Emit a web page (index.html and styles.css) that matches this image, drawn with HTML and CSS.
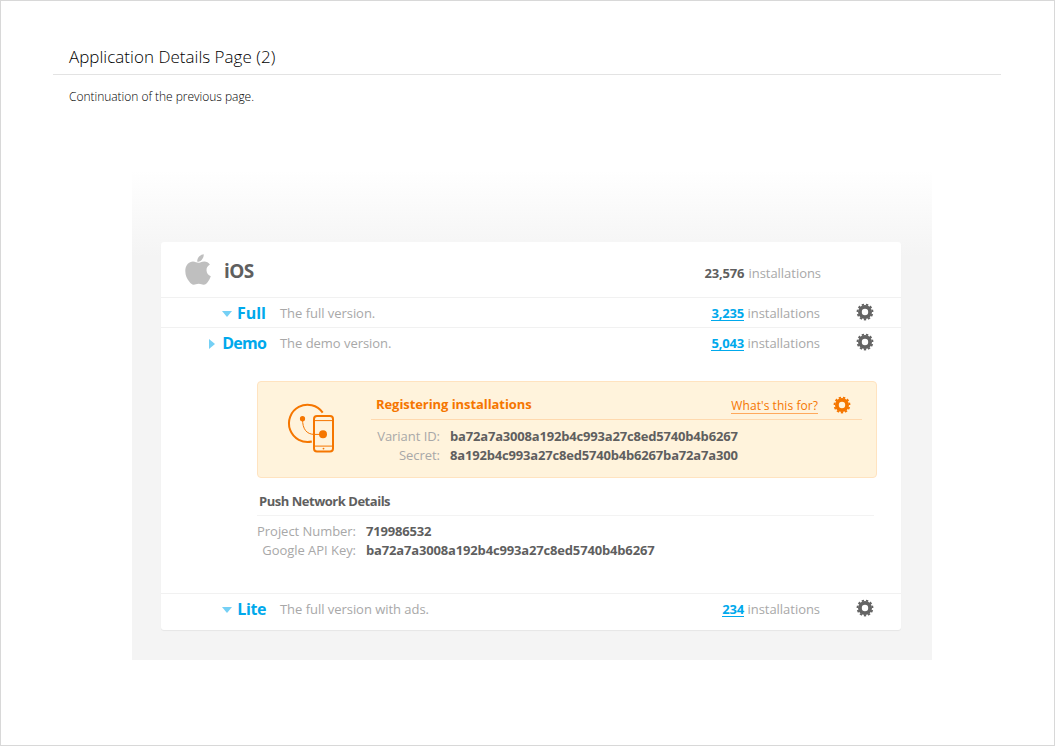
FILE: index.html
```html
<!DOCTYPE html>
<html lang="en">
<head>
<meta charset="utf-8">
<title>Application Details Page (2)</title>
<link rel="stylesheet" href="styles.css">
</head>
<body>
<svg class="defs" width="0" height="0" aria-hidden="true">
  <symbol id="gear" viewBox="0 0 18 18">
    <g fill="none" stroke="currentColor">
      <circle cx="9" cy="9" r="5.1" stroke-width="3.8"/>
      <circle cx="9" cy="9" r="7.500" stroke-width="1.800" pathLength="22" stroke-dasharray="1.1 .9" stroke-dashoffset="-.95"/>
    </g>
  </symbol>
</svg>
<main class="sheet">
  <header class="intro">
    <h1 class="title">Application Details Page (2)</h1>
    <p class="lead">Continuation of the previous page.</p>
  </header>
  <div class="backdrop">
    <section class="card">
      <div class="platform">
        <svg class="apple" viewBox="0 0 26 31" width="26" height="31"><path fill="#bfbfbf" d="M18.7.2c.3 2.100-.7 4.100-1.900 5.500-1.200 1.400-2.900 2.200-4.500 2.100-.3-2 .7-4.100 1.800-5.300C15.300 1.200 17.200.3 18.700.2zM24.900 10.600c-2.300 1.400-3.500 3.300-3.400 5.700.1 2.900 1.700 4.900 4.300 6-.7 2-1.700 3.900-3 5.600-1.100 1.500-2.300 2.800-4.200 2.800-1.800 0-2.500-1-4.900-1s-3.300 1-5 1c-1.800 0-3.100-1.400-4.300-3C2 25.300.3 21.300.3 17c0-5.900 3.700-9.500 7.700-9.500 2.100 0 3.900 1.300 5.300 1.300 1.300 0 3.400-1.400 6-1.400 2.300 0 4.300 1.200 5.600 3.200z"/></svg>
        <h2 class="platform-name">iOS</h2>
        <span class="total"><b>23,576</b> <span class="unit">installations</span></span>
      </div>
      <div class="variant">
        <div class="name"><svg class="down" width="10" height="6"><path d="M0 0h10L5 6z"/></svg><a class="full">Full</a></div>
        <span class="about">The full version.</span>
        <span class="count"><a>3,235</a> <span class="unit">installations</span></span>
        <svg class="gear"><use href="#gear"/></svg>
      </div>
      <div class="variant">
        <div class="name"><svg class="side" width="6" height="10"><path d="M0 0v10L6 5z"/></svg><a class="demo">Demo</a></div>
        <span class="about">The demo version.</span>
        <span class="count"><a>5,043</a> <span class="unit">installations</span></span>
        <svg class="gear"><use href="#gear"/></svg>
      </div>
      <div class="details">
        <div class="notice">
          <svg class="device" width="48" height="50" viewBox="0 0 48 50" fill="none" stroke="#f57600">
            <path stroke-width="2" d="M34.700 8.600A18.600 18.600 0 1 0 23.800 37.500"/>
            <rect x="26" y="12" width="19" height="35.500" rx="3" stroke-width="2"/>
            <path stroke-width="1" d="M26 16.600h19M26 42.100h19M14.500 15c0 10 4 15.400 12 15.400h8"/>
            <g fill="#f57600" stroke="none"><circle cx="14.500" cy="14.700" r="2.600"/><circle cx="35" cy="30.300" r="4"/><circle cx="35.500" cy="44.600" r=".9"/></g>
          </svg>
          <div class="notice-body">
            <div class="notice-head">
              <h3 class="notice-title">Registering installations</h3>
              <a class="help">What's this for?</a>
              <svg class="gear gear-orange"><use href="#gear"/></svg>
            </div>
            <dl class="pairs reg">
              <dt>Variant ID:</dt><dd>ba72a7a3008a192b4c993a27c8ed5740b4b6267</dd>
              <dt>Secret:</dt><dd>8a192b4c993a27c8ed5740b4b6267ba72a7a300</dd>
            </dl>
          </div>
        </div>
        <h3 class="push-title">Push Network Details</h3>
        <dl class="pairs push">
          <dt>Project Number:</dt><dd>719986532</dd>
          <dt>Google API Key:</dt><dd class="api-key">ba72a7a3008a192b4c993a27c8ed5740b4b6267</dd>
        </dl>
      </div>
      <div class="variant">
        <div class="name"><svg class="down" width="10" height="6"><path d="M0 0h10L5 6z"/></svg><a class="lite">Lite</a></div>
        <span class="about">The full version with ads.</span>
        <span class="count"><a>234</a> <span class="unit">installations</span></span>
        <svg class="gear"><use href="#gear"/></svg>
      </div>
    </section>
  </div>
</main>
</body>
</html>
```
FILE: styles.css
```css
* { box-sizing: border-box; margin: 0; padding: 0; }
body { background: #fff; font: 13px/19px "Open Sans", "Noto Sans", sans-serif; color: #5f5f5f; }
svg { display: block; flex: none; overflow: visible; }
.defs { position: absolute; }
.sheet { width: 1055px; height: 746px; border: 1px solid #d8d8d8; overflow: hidden; white-space: nowrap; }
.intro { margin: 0 53px 0 52px; height: 169px; color: #000; }
.title { height: 74px; padding: 43px 0 0 16px; border-bottom: 1px solid #e3e3e3; font-size: 17px; line-height: 25px; font-weight: 300; letter-spacing: .02px; }
.lead { padding: 13px 0 0 16px; font-size: 12px; line-height: 17px; font-weight: 300; letter-spacing: -.03px; }
.backdrop { width: 800px; height: 490px; margin-left: 131px; padding: 72px 31px 0 29px; background: linear-gradient(#fff, #f4f4f4 86px); }
.card { width: 740px; height: 388px; background: #fff; border-radius: 3px; box-shadow: 0 1px 1px rgba(0,0,0,.06); }
.platform { display: flex; height: 55px; padding: 12px 80px 0 24px; }
.platform-name { width: 120px; margin: 4px 0 0 13px; font-size: 19px; line-height: 26px; font-weight: 700; letter-spacing: -.6px; }
.total { margin: 10px 0 0 auto; }
.total b { font-weight: 700; letter-spacing: -.2px; margin-right: 1px; }
.unit, .about, dt { color: #a8a8a8; letter-spacing: -.04px; }
.variant { display: grid; grid-template-columns: 119px 300px 253px 1fr; height: 30px; padding-top: 6px; border-top: 1px solid #f1f1f1; }
.name { display: flex; justify-content: flex-end; align-items: center; gap: 5px; width: 105px; height: 19px; color: #00a9ec; font-size: 16px; font-weight: 700; }
.name svg { fill: #75d0f5; }
.side { margin-right: 2px; }
.demo { letter-spacing: -.8px; }
.lite { letter-spacing: -.4px; }
.count { text-align: right; padding-right: 13px; }
.count a { color: #00a9ec; font-weight: 700; letter-spacing: -.15px; border-bottom: 1px solid #00a9ec; display: inline-block; line-height: 14px; }
.gear { width: 18px; height: 18px; margin: -1px 0 0 23px; color: #646464; }
.details { height: 236px; padding: 24px 24px 0 96px; }
.notice { display: flex; width: 620px; height: 97px; padding: 0 14px 0 30px; background: #fff3dc; border: 1px solid #ffe3c0; border-radius: 4px; }
.device { margin-top: 22px; }
.notice-body { width: 492px; margin-left: 35px; }
.notice-head { display: flex; height: 38px; padding: 12px 0 0 5px; border-bottom: 1px solid #ffd9ae; color: #f57600; }
.notice-title { font-size: 13px; line-height: 20px; font-weight: 700; letter-spacing: -.07px; }
.help { margin: 4px 0 0 auto; height: 16px; font-size: 12px; line-height: 16px; letter-spacing: .06px; border-bottom: 1px solid #ffa95c; }
.gear-orange { margin: 2px 11px 0 15px; color: #f57600; }
.pairs { display: grid; grid-auto-rows: 19px; column-gap: 10px; }
.pairs dt { text-align: right; }
.pairs dd { font-weight: 700; letter-spacing: -.18px; }
.pairs .api-key { letter-spacing: -.16px; }
.reg { grid-template-columns: 69px 1fr; padding-top: 7px; }
.push-title { width: 617px; height: 37px; padding: 13px 0 0 2px; border-bottom: 1px solid #f3f3f3; font-size: 13px; line-height: 19px; letter-spacing: -.48px; margin-top: 1px; }
.push { grid-template-columns: 99px 1fr; padding-top: 6px; }
```
